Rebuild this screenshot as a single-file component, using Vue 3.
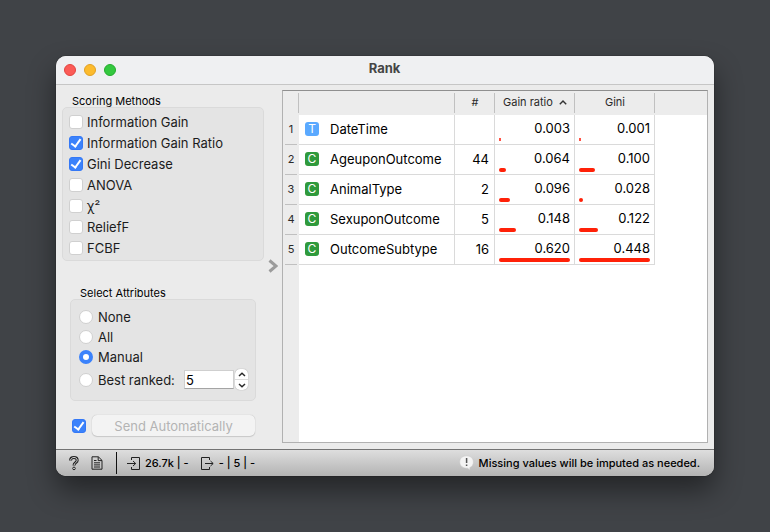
<script setup>
import { ref } from 'vue'

const methods = ref([
  { name: 'Information Gain', on: false },
  { name: 'Information Gain Ratio', on: true },
  { name: 'Gini Decrease', on: true },
  { name: 'ANOVA', on: false },
  { name: 'χ²', on: false },
  { name: 'ReliefF', on: false },
  { name: 'FCBF', on: false }
])

const choices = ['None', 'All', 'Manual']
const selection = ref('Manual')
const best = ref('5')
const auto = ref(true)

const rows = [
  { name: 'DateTime', kind: 'T', count: '', scores: [0.003, 0.001] },
  { name: 'AgeuponOutcome', kind: 'C', count: '44', scores: [0.064, 0.1] },
  { name: 'AnimalType', kind: 'C', count: '2', scores: [0.096, 0.028] },
  { name: 'SexuponOutcome', kind: 'C', count: '5', scores: [0.148, 0.122] },
  { name: 'OutcomeSubtype', kind: 'C', count: '16', scores: [0.62, 0.448] }
]
const maxima = [0.62, 0.448]
const share = (value, col) => (value / maxima[col]) * 100 + '%'

function step(by) {
  best.value = String(Math.max(1, Number(best.value) + by))
}
</script>

<template>
  <div class="desktop">
    <main class="window">
      <header class="titlebar">
        <div class="lights">
          <button class="light red" aria-label="Close"></button>
          <button class="light yellow" aria-label="Minimize"></button>
          <button class="light green" aria-label="Zoom"></button>
        </div>
        <h1>Rank</h1>
      </header>

      <div class="body">
        <aside class="controls">
          <section class="scoring">
            <h2>Scoring Methods</h2>
            <div class="group methods">
              <label v-for="m in methods" :key="m.name" class="option">
                <input v-model="m.on" type="checkbox" class="check" />
                <span>{{ m.name }}</span>
              </label>
            </div>
          </section>

          <section class="select">
            <h2>Select Attributes</h2>
            <div class="group choices">
              <label v-for="c in choices" :key="c" class="choice">
                <input v-model="selection" type="radio" name="attrs" :value="c" class="radio" />
                <span>{{ c }}</span>
              </label>
              <div class="best">
                <label class="choice">
                  <input v-model="selection" type="radio" name="attrs" value="Best" class="radio" />
                  <span>Best ranked:</span>
                </label>
                <div class="spin">
                  <input v-model="best" type="text" class="number" aria-label="Best ranked count" />
                  <div class="stepper">
                    <button aria-label="Increase" @click="step(1)">
                      <svg viewBox="0 0 8 5"><path d="M1 4 4 1.2 7 4" /></svg>
                    </button>
                    <button aria-label="Decrease" @click="step(-1)">
                      <svg viewBox="0 0 8 5"><path d="M1 1 4 3.8 7 1" /></svg>
                    </button>
                  </div>
                </div>
              </div>
            </div>
          </section>

          <div class="send">
            <input v-model="auto" type="checkbox" class="check" aria-label="Send automatically" />
            <button class="push" disabled>Send Automatically</button>
          </div>
        </aside>

        <button class="drawer" aria-label="Collapse panel">
          <svg viewBox="0 0 10 14"><path d="M1.5 1.5 8 7 1.5 12.5" /></svg>
        </button>

        <div class="view">
          <table>
            <colgroup>
              <col class="c-row" />
              <col class="c-name" />
              <col class="c-count" />
              <col class="c-score" />
              <col class="c-score" />
              <col />
            </colgroup>
            <thead>
              <tr>
                <th></th>
                <th></th>
                <th>#</th>
                <th>
                  Gain ratio
                  <svg class="sort" viewBox="0 0 8 5"><path d="M0.8 4.2 4 1 7.2 4.2" /></svg>
                </th>
                <th>Gini</th>
                <th class="rest"></th>
              </tr>
            </thead>
            <tbody>
              <tr v-for="(r, i) in rows" :key="r.name">
                <th scope="row"><div class="rownum">{{ i + 1 }}</div></th>
                <td>
                  <div class="name">
                    <span class="kind" :class="r.kind === 'T' ? 'time' : 'cat'">{{ r.kind }}</span>
                    <span>{{ r.name }}</span>
                  </div>
                </td>
                <td class="count">{{ r.count }}</td>
                <td v-for="(s, c) in r.scores" :key="c">
                  <div class="score">
                    <span>{{ s.toFixed(3) }}</span>
                    <div class="bar" :class="{ tiny: s < 0.01 }" :style="{ width: share(s, c) }"></div>
                  </div>
                </td>
                <td class="rest"></td>
              </tr>
            </tbody>
          </table>
        </div>
      </div>

      <footer class="status">
        <button class="icon help" aria-label="Help">
          <svg viewBox="0 0 12 16">
            <path class="outer" d="M2.6 5.4C2.6 1.4 9.2 1.6 9.2 5.2 9.2 7.8 6 7.6 6 10.4" />
            <path class="inner" d="M2.6 5.2C2.8 1.6 9.2 1.6 9.2 5.2 9.2 7.8 6 7.6 6 10.2" />
            <circle cx="6" cy="13.4" r="1.3" />
          </svg>
        </button>
        <button class="icon report" aria-label="Report">
          <svg viewBox="0 0 12 14">
            <path d="M1 .8H7.4L11 4.4V13.2H1ZM7.2 1V4.6H11M3 4.5H5.5M3 6.8H9M3 8.9H9M3 11H9" />
          </svg>
        </button>
        <span class="rule"></span>
        <div class="flow">
          <svg viewBox="0 0 13 15"><path d="M4.5 4V1.5H12.5V13.5H4.5V11M0 7.5H8.5M6 5 8.7 7.5 6 10" /></svg>
          <span>26.7k | -</span>
        </div>
        <div class="flow">
          <svg viewBox="0 0 13 15"><path d="M8.5 4V1.5H.5V13.5H8.5V11M4 7.5H12M9.5 5 12.2 7.5 9.5 10" /></svg>
          <span>- | 5 | -</span>
        </div>
        <div class="message">
          <svg viewBox="0 0 16 16">
            <path class="bubble" d="M7.5.8C11.6.8 14.4 3.4 14.4 7 14.4 9.6 13 11.6 10.8 12.6L11 15 8.6 13.2C4 13.6.7 10.8.7 7 .7 3.4 3.4.8 7.5.8Z" />
            <path class="bang" d="M7.6 3V8M7.6 9.4V11" />
          </svg>
          <span>Missing values will be imputed as needed.</span>
        </div>
      </footer>
    </main>
  </div>
</template>

<style>
body {
  margin: 0;
  background: #404347;
}
</style>

<style scoped>
*,
*::before {
  box-sizing: border-box;
}
.desktop {
  min-height: 100vh;
  padding: 56px;
  display: flex;
  background: #404347;
  font-family: Inter, "Liberation Sans", sans-serif;
  font-size: 13px;
  color: #000;
}
button {
  padding: 0;
  border: 0;
  background: none;
  font: inherit;
}
input {
  margin: 0;
  font: inherit;
}
svg {
  display: block;
  fill: none;
}
h1,
h2 {
  margin: 0;
}
.window {
  flex: 1;
  display: flex;
  flex-direction: column;
  border-radius: 10px;
  overflow: hidden;
  background: #ebebeb;
  box-shadow: 0 0 1px #000, 0 14px 28px rgba(0, 0, 0, 0.45);
}
.titlebar {
  display: grid;
  grid-template-columns: 1fr auto 1fr;
  align-items: center;
  height: 29px;
  padding: 0 9px 0 8px;
  background: #eff0f2;
  border-bottom: 1px solid #c6c6c6;
}
.titlebar h1 {
  font-size: 13px;
  line-height: 16px;
  padding-bottom: 4px;
  font-weight: 700;
  color: #454545;
}
.lights {
  display: flex;
  gap: 8px;
}
.light {
  width: 12px;
  height: 12px;
  border-radius: 50%;
  border: 1px solid;
}
.red {
  background: #fb5b57;
  border-color: #e2443f;
}
.yellow {
  background: #fcbb2e;
  border-color: #e0a024;
}
.green {
  background: #34c83f;
  border-color: #24ab2e;
}
.body {
  flex: 1;
  display: flex;
  padding: 5px 6px 6px;
}
.controls {
  width: 202px;
  display: flex;
  flex-direction: column;
  color: #1c1c1c;
}
h2 {
  font-size: 11px;
  line-height: 14px;
  padding-left: 10px;
  font-weight: 400;
  color: #000;
}
.scoring {
  padding-top: 4px;
}
.select {
  padding: 25px 8px 0;
}
.group {
  background: #e4e4e4;
  border: 1px solid #dadada;
  border-radius: 5px;
}
.scoring .group {
  padding: 3px 6px 2px;
  margin-top: -1px;
}
.select .group {
  padding: 7px 7px 10px 8px;
  margin-top: -1px;
}
.option {
  display: flex;
  align-items: center;
  gap: 4px;
  height: 21px;
}
.choice {
  display: flex;
  align-items: center;
  gap: 5px;
  height: 20px;
}
.check,
.radio {
  appearance: none;
  flex: none;
  width: 14px;
  height: 14px;
  background: #fff;
  border: 1px solid #d0d0d0;
  border-radius: 3px;
}
.radio {
  border-radius: 50%;
}
.check:checked {
  border-color: #3478f6;
  background: #3b82fb;
  display: grid;
  place-items: center;
}
.check:checked::before {
  content: "";
  width: 6px;
  height: 10px;
  margin-bottom: 2px;
  border: solid #fff;
  border-width: 0 2px 2px 0;
  transform: rotate(36deg);
}
.radio:checked {
  border: 4px solid #3b82fb;
}
.best {
  display: flex;
  align-items: center;
  justify-content: space-between;
  padding-top: 2px;
}
.spin {
  display: flex;
  align-items: center;
  gap: 1px;
}
.number {
  width: 50px;
  height: 19px;
  padding: 0 1px;
  border: 1px solid #cfcfcf;
  border-bottom-color: #a4a4a4;
  background: #fff;
  outline: 0;
}
.stepper {
  width: 13px;
  height: 21px;
  border-radius: 5px;
  background: #fff;
  box-shadow: 0 0 1px #888;
  display: grid;
  overflow: hidden;
}
.stepper button {
  display: grid;
  place-items: center;
}
.stepper button + button {
  border-top: 1px solid #ddd;
}
.stepper svg {
  width: 8px;
  height: 5px;
  stroke: #2a2a2a;
  stroke-width: 1.5;
}
.send {
  display: flex;
  align-items: center;
  gap: 6px;
  padding: 14px 9px 0 10px;
}
.push {
  flex: 1;
  height: 21px;
  border-radius: 5px;
  background: #f3f3f3;
  box-shadow: 0 0 1px #aaa, 0 1px 1px #ccc;
  color: #b4b4b4;
}
.drawer {
  width: 18px;
  padding-bottom: 2px;
  display: grid;
  place-items: center;
}
.drawer svg {
  width: 10px;
  height: 14px;
  stroke: #9b9b9b;
  stroke-width: 3;
}
.view {
  flex: 1;
  border: 1px solid #b1b1b1;
  border-top-color: #8f8f8f;
  background: linear-gradient(to right, #ececec 16px, #fff 16px);
}
table {
  width: 100%;
  table-layout: fixed;
  border-collapse: separate;
  border-spacing: 0;
}
.c-row {
  width: 16px;
}
.c-name {
  width: 156px;
}
.c-count {
  width: 40px;
}
.c-score {
  width: 80px;
}
th,
td {
  padding: 0;
}
thead th {
  height: 24px;
  padding-bottom: 2px;
  font-size: 11px;
  font-weight: 400;
  color: #2a2a2a;
  background: linear-gradient(#c0c0c0, #c0c0c0) right 2px / 1px 20px no-repeat, #ececec;
}
thead th.rest {
  background: #ececec;
}
.sort {
  display: inline-block;
  width: 8px;
  height: 5px;
  margin-left: 3px;
  vertical-align: 1px;
  stroke: #333;
  stroke-width: 1.4;
}
tbody td {
  height: 30px;
  border-right: 1px solid #dadada;
  border-bottom: 1px solid #dadada;
}
tbody td.rest {
  border: 0;
}
tbody th {
  padding: 0 2px;
  font-size: 11px;
  font-weight: 400;
  color: #2a2a2a;
}
.rownum {
  height: 30px;
  line-height: 29px;
  border-bottom: 1px solid #c0c0c0;
}
.name {
  display: flex;
  align-items: center;
  gap: 11px;
  padding: 0 0 1px 6px;
}
.kind {
  width: 14px;
  height: 14px;
  border-radius: 3px;
  color: #fff;
  font-size: 12px;
  line-height: 14px;
  text-align: center;
}
.time {
  background: #5aa9ff;
}
.cat {
  background: #2f9a3c;
}
tbody td.count {
  text-align: right;
  padding: 0 5px 1px 0;
}
.score {
  height: 29px;
  padding: 5px 4px 2px;
  display: flex;
  flex-direction: column;
  justify-content: space-between;
  line-height: 16px;
  text-align: right;
}
.bar {
  height: 4px;
  min-width: 2px;
  border-radius: 2px;
  background: #ff2108;
}
.bar.tiny {
  height: 3px;
  margin-bottom: 1px;
  border-radius: 0;
  background: #ff5144;
}
.status {
  display: flex;
  align-items: center;
  height: 27px;
  padding: 0 14px 0 12px;
  border-top: 1px solid #737373;
  background: linear-gradient(#dedede, #b3b3b3);
  font-size: 11px;
  font-weight: 500;
}
.icon svg,
.flow svg {
  stroke: #222;
  stroke-width: 1;
}
.help svg {
  width: 12px;
  height: 16px;
}
.help .outer {
  stroke: #222;
  stroke-width: 3;
}
.help .inner {
  stroke: #d4d4d4;
  stroke-width: 1;
}
.help circle {
  fill: #ddd;
}
.report {
  margin-left: 11px;
}
.report svg {
  width: 12px;
  height: 14px;
}
.rule {
  width: 1px;
  height: 22px;
  margin: 0 10px 0 13px;
  background: #111;
}
.flow {
  display: flex;
  align-items: center;
  gap: 5px;
  margin-right: 12px;
}
.flow svg {
  width: 13px;
  height: 15px;
}
.message {
  margin-left: auto;
  display: flex;
  align-items: center;
  gap: 4px;
}
.message svg {
  width: 16px;
  height: 16px;
}
.bubble {
  fill: #f4f4f4;
  stroke: #c8c8c8;
  stroke-width: 0.6;
}
.bang {
  stroke: #555;
  stroke-width: 1.5;
}
</style>
